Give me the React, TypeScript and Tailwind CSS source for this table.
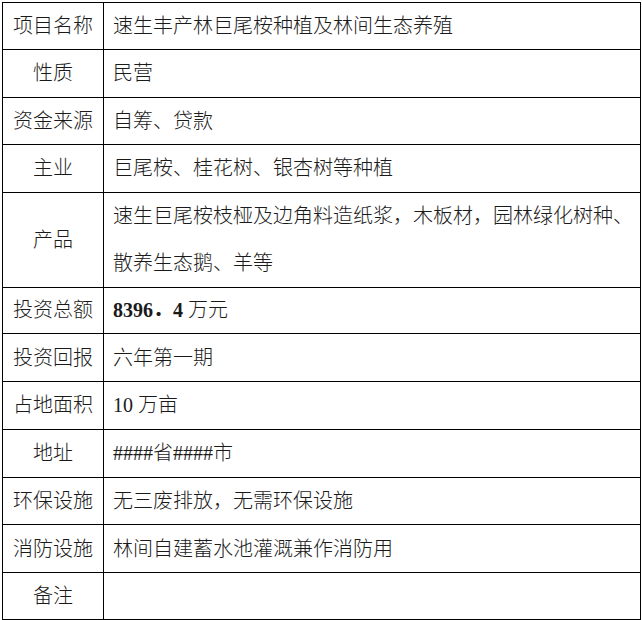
import React from "react";

const font = { fontFamily: '"Liberation Serif", "Noto Sans CJK SC", serif' };

type Row = { label: string; value: React.ReactNode; h: string; multi?: boolean };

const rows: Row[] = [
  { label: "项目名称", value: "速生丰产林巨尾桉种植及林间生态养殖", h: "h-[47px]" },
  { label: "性质", value: "民营", h: "h-[47.5px]" },
  { label: "资金来源", value: "自筹、贷款", h: "h-[47.5px]" },
  { label: "主业", value: "巨尾桉、桂花树、银杏树等种植", h: "h-[47.5px]" },
  {
    label: "产品",
    value: (
      <>
        速生巨尾桉枝桠及边角料造纸浆，木板材，园林绿化树种、
        <br />
        散养生态鹅、羊等
      </>
    ),
    h: "h-[95px]",
    multi: true,
  },
  {
    label: "投资总额",
    value: (
      <>
        <span className="font-bold">8396．4</span> 万元
      </>
    ),
    h: "h-[46.5px]",
  },
  { label: "投资回报", value: "六年第一期", h: "h-[48px]" },
  { label: "占地面积", value: "10 万亩", h: "h-[47.5px]" },
  { label: "地址", value: "####省####市", h: "h-[48px]" },
  { label: "环保设施", value: "无三废排放，无需环保设施", h: "h-[47.5px]" },
  { label: "消防设施", value: "林间自建蓄水池灌溉兼作消防用", h: "h-[48px]" },
  { label: "备注", value: "", h: "h-[47px]" },
];

export default function App() {
  return (
    <div className="w-[642px] h-[620px] bg-white overflow-hidden" style={font}>
      <div className="ml-[2px] mt-[2px] w-[639px] border-l border-t border-black text-[20px] text-[#1a1a1a]">
        {rows.map((r, i) => (
          <div key={i} className={`flex ${r.h}`}>
            <div className="w-[101px] shrink-0 border-r border-b border-black flex items-center justify-center font-light">
              {r.label}
            </div>
            <div
              className={`flex-1 border-r border-b border-black flex items-center pl-[9px] font-light ${
                r.multi ? "leading-[47px]" : ""
              }`}
            >
              <div>{r.value}</div>
            </div>
          </div>
        ))}
      </div>
    </div>
  );
}
